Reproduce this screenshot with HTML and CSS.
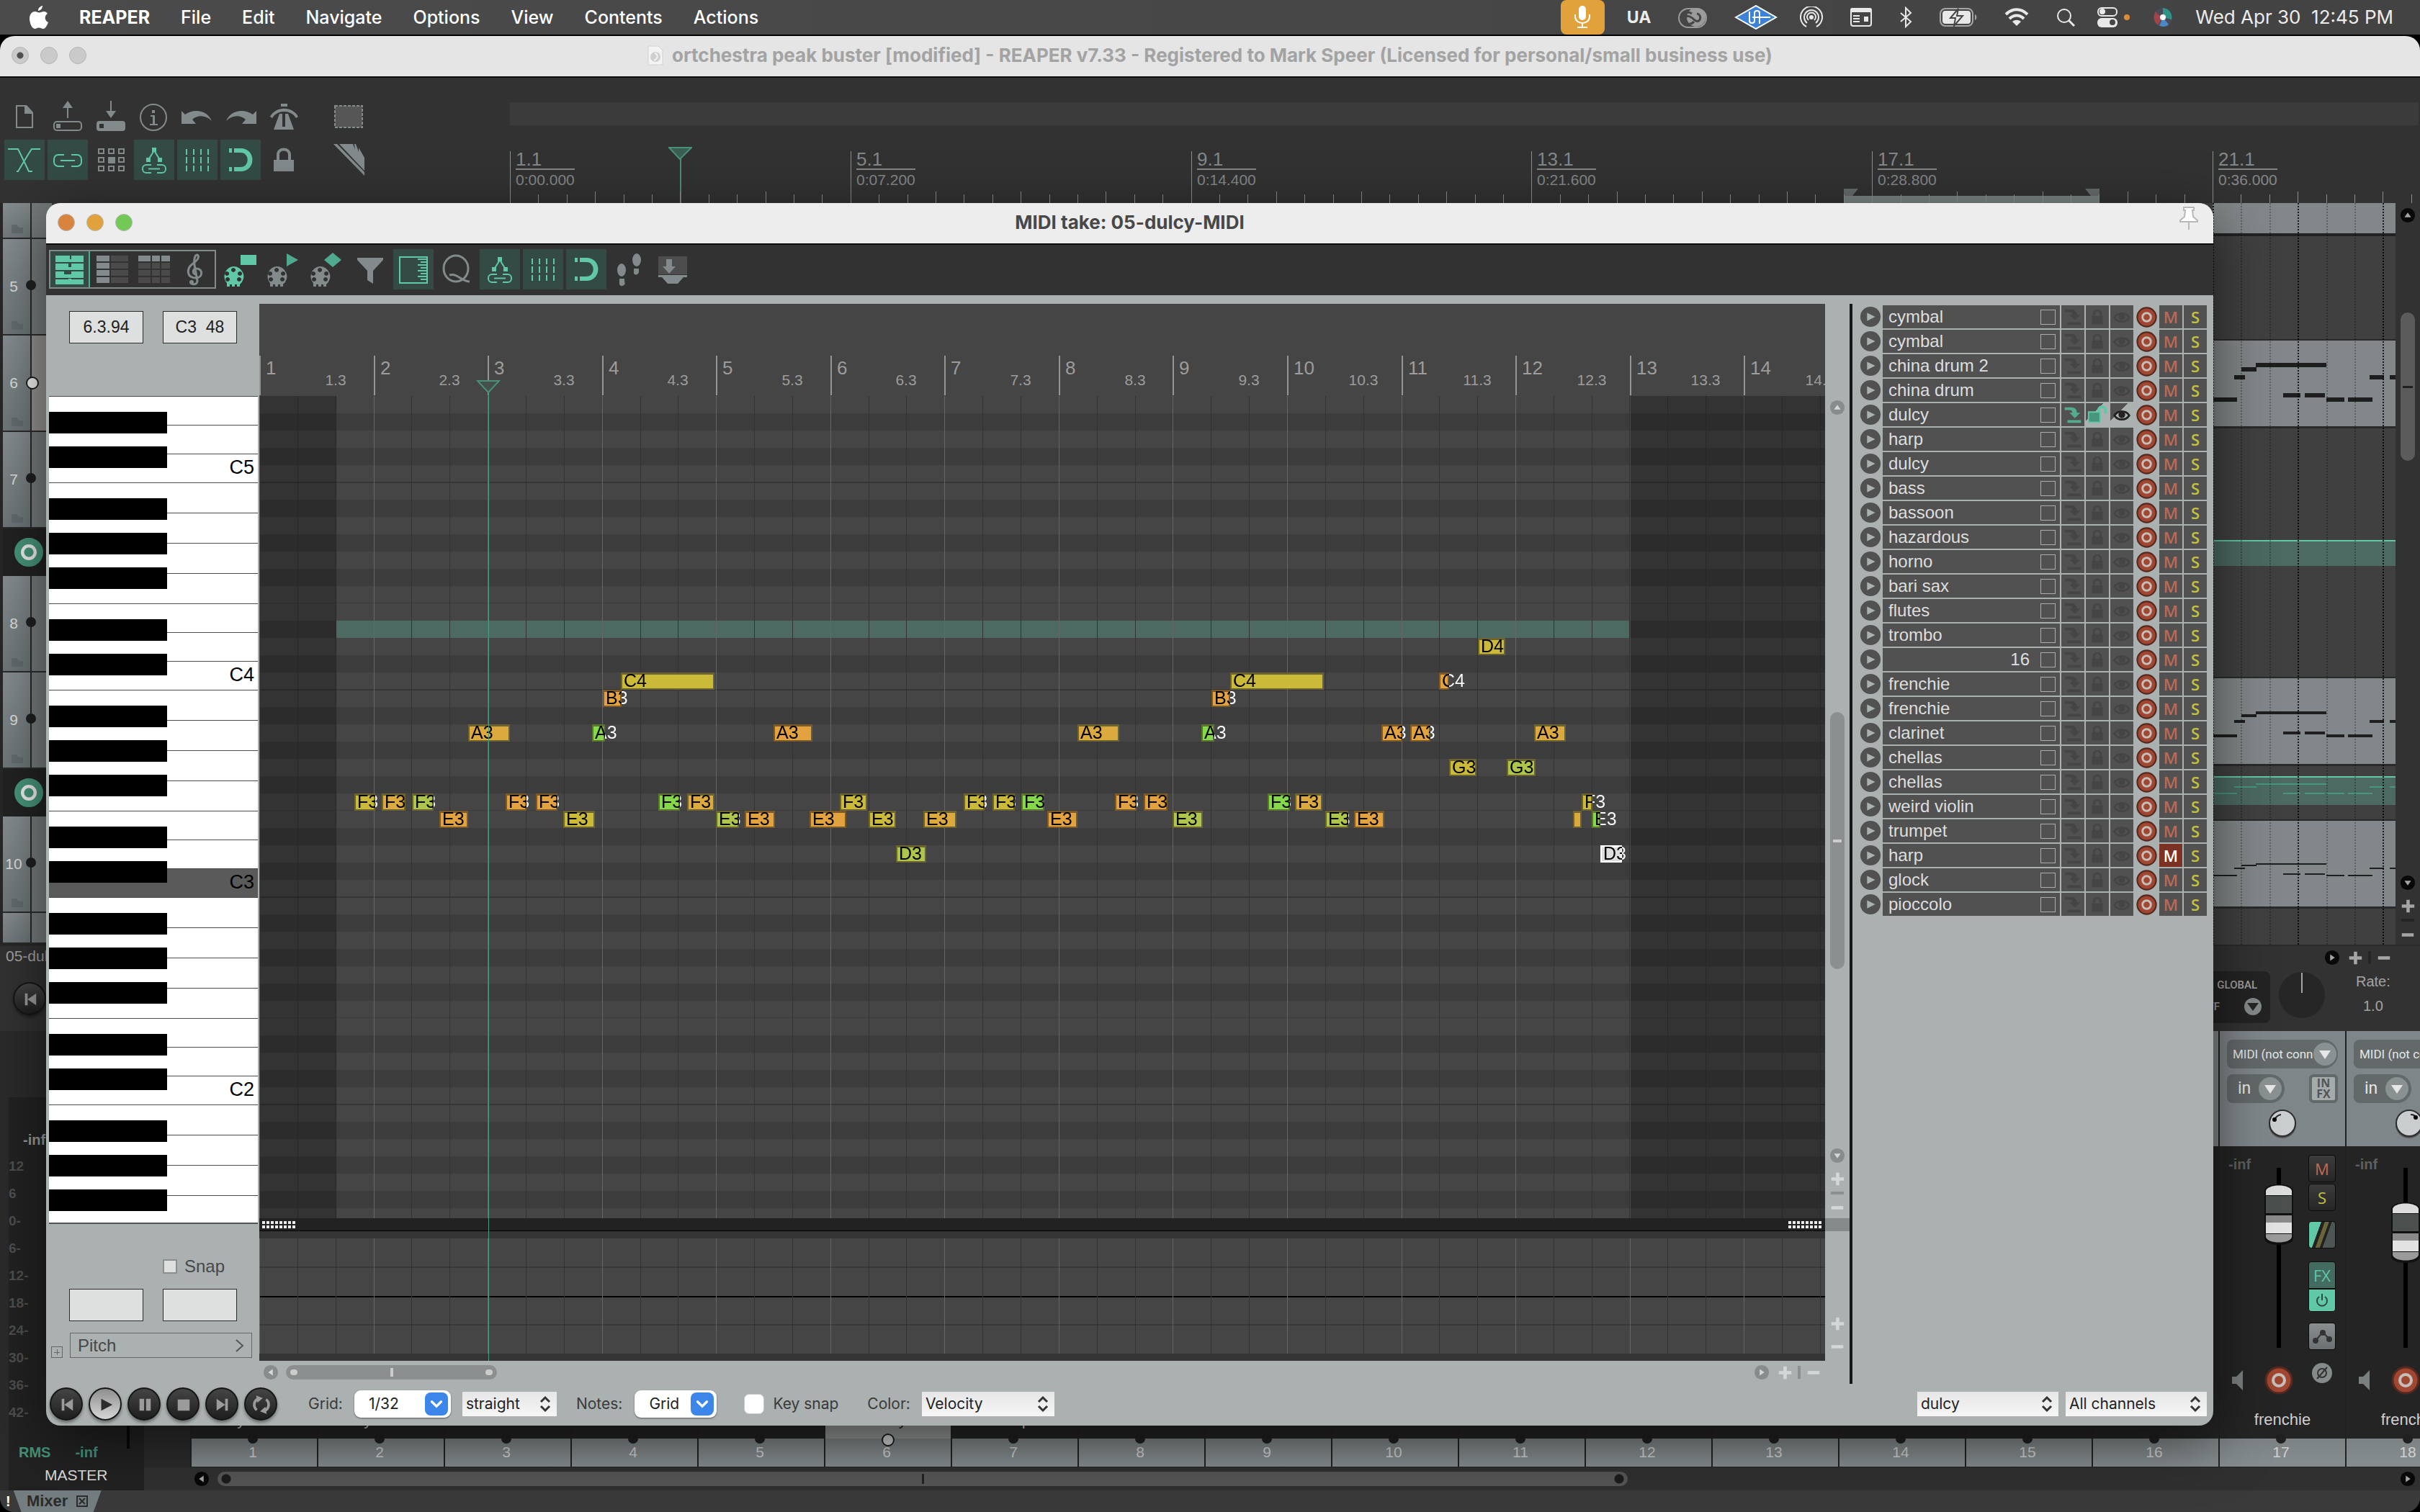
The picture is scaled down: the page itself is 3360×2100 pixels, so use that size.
FILE: index.html
```html
<!DOCTYPE html>
<html lang="en">
<head>
    <meta charset="UTF-8">
    <meta name="viewport" content="width=device-width, initial-scale=1.0">
    <title>REAPER - MIDI take: 05-dulcy-MIDI</title>
    <link rel="stylesheet" href="styles.css">
</head>
<body>

<!-- shared icons -->
<svg class="sprite" aria-hidden="true">
    <symbol id="i-envlink" viewBox="0 0 56 56">
        <g fill="none" stroke="currentColor" stroke-width="2"><path d="M20 28l8-13 8 13M24 35h-7a5 5 0 0 0-5 5v1a5 5 0 0 0 5 5h7M32 35h7a5 5 0 0 1 5 5v1a5 5 0 0 1-5 5h-7M20 40.500h16"/></g>
        <path d="M25 11h6v6h-6zM17 25h6v6h-6zM33 25h6v6h-6z" fill="currentColor"/>
    </symbol>
    <symbol id="i-gridlines" viewBox="0 0 56 56"><path d="M13 13v8M23 13v8M33 13v8M43 13v8M13 24v9M23 24v9M33 24v9M43 24v9M13 36v8M23 36v8M33 36v8M43 36v8" stroke="currentColor" stroke-width="2"/></symbol>
    <symbol id="i-magnet" viewBox="0 0 56 56"><path d="M12 12h4v6h-4zM19 12h9c22 0 22 32 0 32h-9v-6h9c13 0 13-20 0-20h-9zM12 38h4v6h-4z" fill="currentColor"/></symbol>
    <symbol id="i-plug" viewBox="0 0 56 56"><path fill-rule="evenodd" fill="currentColor" d="M18 24a14 14 0 0 1 9 25v3h-4v-3h-3v3h-4v-3h-3v3h-4v-5l-1-1a14 14 0 0 1 10-22zM18 26a3 3 0 1 0 .1 0zM9 31a3 3 0 1 0 .1 0zM27 31a3 3 0 1 0 .1 0zM10 39a3 3 0 1 0 .1 0zM26 39a3 3 0 1 0 .1 0z"/></symbol>
    <symbol id="i-left" viewBox="0 0 24 24"><circle cx="12" cy="12" r="11" fill="var(--c)"/><path d="M15 7v10l-7-5z" fill="var(--t)"/></symbol>
    <symbol id="i-right" viewBox="0 0 24 24"><circle cx="12" cy="12" r="11" fill="var(--c)"/><path d="M9 7v10l7-5z" fill="var(--t)"/></symbol>
    <symbol id="i-up" viewBox="0 0 24 24"><circle cx="12" cy="12" r="11" fill="var(--c)"/><path d="M7 15h10l-5-7z" fill="var(--t)"/></symbol>
    <symbol id="i-down" viewBox="0 0 24 24"><circle cx="12" cy="12" r="11" fill="var(--c)"/><path d="M7 9h10l-5 7z" fill="var(--t)"/></symbol>
    <symbol id="i-plus" viewBox="0 0 24 24"><path d="M10 3h5v7h7v5h-7v7h-5v-7H3v-5h7z" fill="var(--t)"/></symbol>
    <symbol id="i-minus" viewBox="0 0 24 24"><path d="M3 10h18v5H3z" fill="var(--t)"/></symbol>
    <symbol id="i-updown" viewBox="0 0 18 24"><path d="M3 9l6-6 6 6M3 15l6 6 6-6" fill="none" stroke="#333" stroke-width="3"/></symbol>
    <symbol id="i-chev" viewBox="0 0 24 24"><path d="M6 9l6 6 6-6" fill="none" stroke="#fff" stroke-width="3" stroke-linecap="round"/></symbol>
    <symbol id="i-prev" viewBox="0 0 48 48"><path d="M16 15h4v18h-4zM33 15v18l-13-9z" fill="currentColor"/></symbol>
    <symbol id="i-play" viewBox="0 0 32 32"><circle cx="16" cy="16" r="15" fill="#515151"/><path d="M11 10v12l12-6z" fill="#abb1b1"/></symbol>
    <symbol id="i-insert" viewBox="0 0 32 32"><path d="M4 5h10c5 0 8 3 8 8h5l-8 8-8-8h4c0-3-1-4-4-4H4zM8 24h20v4H8z" fill="currentColor"/></symbol>
    <symbol id="i-lock" viewBox="0 0 32 32"><path d="M8 15h16v12H8z" fill="currentColor"/><path d="M11 15v-4c0-6 10-6 10 0v4" fill="none" stroke="currentColor" stroke-width="3"/></symbol>
    <symbol id="i-unlock" viewBox="0 0 32 32"><path d="M3 12h17v15H3z" fill="#47957c" stroke="#60c7a7" stroke-width="2"/><path d="M18 12V9c0-6 10-6 10 0v5" fill="none" stroke="#60c7a7" stroke-width="4"/></symbol>
    <symbol id="i-eye" viewBox="0 0 32 32"><path d="M5 17c5-8 17-8 22 0-5 8-17 8-22 0z" fill="none" stroke="currentColor" stroke-width="3"/><circle cx="16" cy="16" r="5" fill="currentColor"/></symbol>
    <symbol id="i-rec" viewBox="0 0 40 40"><circle cx="20" cy="20" r="18" fill="#a04631" stroke="#55291f" stroke-width="3"/><circle cx="20" cy="20" r="8" fill="none" stroke="#c4bfbb" stroke-width="4"/></symbol>
    <symbol id="i-folder" viewBox="0 0 16 12"><path d="M0 0h7l3 4h6v8H0z" fill="#646b6c"/></symbol>
</svg>

<header class="menubar">
    <nav class="menus">
        <svg class="apple" viewBox="0 0 26 32"><path d="M18 0c.3 3-2.500 7-6 7-.4-3 2.500-6.500 6-7zM25 11c-5 3-4 10 1 12-1.500 4-4 9-7 9-2.500 0-3-1.500-6-1.500S9.500 32 7.500 32C3 32 0 23 0 18 0 11 4 8 7.500 8c2.500 0 4 1.500 6 1.500S17 8 20 8c2 0 4 1 5 3z" fill="#fff"/></svg>
        <button class="app-name">REAPER</button>
        <button>File</button>
        <button>Edit</button>
        <button>Navigate</button>
        <button>Options</button>
        <button>View</button>
        <button>Contents</button>
        <button>Actions</button>
    </nav>
    <div class="status">
        <span class="mic"><svg viewBox="0 0 24 32" width="24" height="32"><rect x="7" y="0" width="10" height="20" rx="5" fill="#fff"/><path d="M2 12v3c0 12 20 12 20 0v-3M12 24v5M5 30h14" fill="none" stroke="#fff" stroke-width="2"/></svg></span>
        <b class="ua tight">UA</b>
        <svg viewBox="0 0 40 30" width="40" height="30"><rect x="1" y="3" width="38" height="26" rx="13" fill="none" stroke="#9b9b9b" stroke-width="2"/><circle cx="25" cy="15" r="13" fill="#9b9b9b"/><path d="M19 10c-6-4-13 0-13 7 0 9 12 9 16 4M10 19c0-8 6-7 13 0 8 6 11-8 3-9" fill="none" stroke="#464646" stroke-width="3"/></svg>
        <svg viewBox="0 0 60 34" width="60" height="34"><path d="M2 17L30 1l28 16-28 16z" fill="#3b82d8" stroke="#fff" stroke-width="2"/><path d="M21 9v13c0 4 7 4 7 0V11c0-4 7-4 7 0v15M25 17h25" fill="none" stroke="#fff" stroke-width="2"/></svg>
        <svg class="tight" viewBox="0 0 32 30" width="32" height="30"><g fill="none" stroke="#e8e8e8" stroke-width="2"><path d="M9 28a15 15 0 1 1 14 0M10 23a10 10 0 1 1 12 0M12 19a6 6 0 1 1 8 0"/></g><circle cx="16" cy="15" r="3" fill="#e8e8e8"/></svg>
        <svg viewBox="0 0 30 26" width="30" height="26"><path d="M3 0h24a3 3 0 0 1 3 3v3H0V3a3 3 0 0 1 3-3z" fill="#e8e8e8"/><rect x="1" y="1" width="28" height="24" rx="3" fill="none" stroke="#e8e8e8" stroke-width="2"/><path d="M4 11h9M4 15h9M4 19h9" stroke="#e8e8e8" stroke-width="2"/><path d="M19 12h6v7h-6z" fill="#e8e8e8"/></svg>
        <svg viewBox="0 0 18 30" width="18" height="30"><path d="M2 9l14 12-7 7V2l7 7L2 21" fill="none" stroke="#e8e8e8" stroke-width="2"/></svg>
        <svg viewBox="0 0 52 26" width="52" height="26"><rect x="1" y="1" width="45" height="24" rx="7" fill="none" stroke="#a5a5a5" stroke-width="2"/><rect x="4" y="4" width="39" height="18" rx="4" fill="#e8e8e8"/><path d="M49 9c3 1 3 7 0 8z" fill="#a5a5a5"/><path d="M26 1L15 14h7l-2 11 12-14h-8z" fill="#e8e8e8" stroke="#464646" stroke-width="2"/></svg>
        <svg viewBox="0 0 34 26" width="34" height="26"><g fill="none" stroke="#e8e8e8" stroke-width="4"><path d="M2 9c9-9 21-9 30 0M7 15c6-6 14-6 20 0"/></g><path d="M11 19c4-3 8-3 12 0l-6 6z" fill="#e8e8e8"/></svg>
        <svg viewBox="0 0 26 26" width="26" height="26"><circle cx="11" cy="11" r="9" fill="none" stroke="#e8e8e8" stroke-width="2"/><path d="M17 17l8 8" stroke="#e8e8e8" stroke-width="3"/></svg>
        <svg class="tight" viewBox="0 0 46 28" width="46" height="28"><rect x="1" y="1" width="26" height="11" rx="5" fill="none" stroke="#e8e8e8" stroke-width="2"/><circle cx="7" cy="6" r="4" fill="#e8e8e8"/><rect x="0" y="15" width="28" height="13" rx="6" fill="#e8e8e8"/><circle cx="21" cy="21" r="4" fill="#464646"/><circle cx="41" cy="14" r="4" fill="#dc8d35"/></svg>
        <svg class="tight" viewBox="0 0 28 28" width="28" height="28"><circle cx="14" cy="14" r="13" fill="#4a4a58"/><path d="M14 1a13 13 0 0 1 12 16L14 14z" fill="#2f9385"/><path d="M4 6c3 5 7 6 10 8L7 25C1 20 0 12 4 6z" fill="#a3434a"/><path d="M14 14l8 10c-4 4-9 3-13 2z" fill="#4a87c4"/><circle cx="14" cy="14" r="4" fill="#fff"/></svg>
        <time class="tight">Wed Apr 30&nbsp; 12:45 PM</time>
    </div>
</header>

<main class="daw">
    <div class="titlebar titlebar-main">
        <div class="lights lights-off"><i class="light"></i><i class="light"></i><i class="light"></i></div>
        <div class="win-title">
            <svg viewBox="0 0 22 28" width="22" height="28"><path d="M1 1h14l6 6v20H1z" fill="#f3f3f3" stroke="#d2d2d2"/><circle cx="11" cy="16" r="7" fill="#cfcfcf"/><path d="M10 11c6 1 4 8-1 10" stroke="#f3f3f3" stroke-width="2" fill="none"/></svg>
            <span>ortchestra peak buster [modified] - REAPER v7.33 - Registered to Mark Speer (Licensed for personal/small business use)</span>
        </div>
    </div>

    <section class="top">
        <div class="toolbars">
            <div class="toolbar">
                <button class="tool" aria-label="New project"><svg viewBox="0 0 56 56"><path d="M17 13h13l9 10v20H17z" fill="none" stroke="currentColor" stroke-width="2"/><path d="M28 12h3l9 10v2H28z" fill="currentColor"/></svg></button>
                <button class="tool" aria-label="Open project"><svg viewBox="0 0 56 56"><rect x="9" y="35" width="38" height="12" rx="4" fill="none" stroke="currentColor" stroke-width="2"/><path d="M12 38h6v6h-6zM27 30V16h-6l7-10 7 10h-6v14z" fill="currentColor"/></svg></button>
                <button class="tool" aria-label="Save project"><svg viewBox="0 0 56 56"><path fill-rule="evenodd" d="M12 34h32a4 4 0 0 1 4 4v6a4 4 0 0 1-4 4H12a4 4 0 0 1-4-4v-6a4 4 0 0 1 4-4zM12 38v6h6v-6zM27 6v14h-6l7 10 7-10h-6V6z" fill="currentColor"/></svg></button>
                <button class="tool" aria-label="Project settings"><svg viewBox="0 0 56 56"><circle cx="27" cy="29" r="18" fill="none" stroke="currentColor" stroke-width="2"/><path d="M25 19h4v4h-4zM23 26h6v12h4v2H22v-2h4V28h-3z" fill="currentColor"/></svg></button>
                <button class="tool" aria-label="Undo"><svg viewBox="0 0 56 56"><path d="M6 20l5 5c13-9 31-6 37 9-8-8-19-9-27-2l5 6H6z" fill="currentColor"/></svg></button>
                <button class="tool" aria-label="Redo"><svg viewBox="0 0 56 56"><path d="M50 20l-5 5C32 16 14 19 8 34c8-8 19-9 27-2l-5 6h20z" fill="currentColor"/></svg></button>
                <button class="tool" aria-label="Metronome"><svg viewBox="0 0 56 56"><path d="M24 10h9v4h-9zM22 24h4v18h4V24h4l8 22H14zM9 28c8-15 31-15 39 0l-3 2c-7-12-26-12-33 0z" fill="currentColor"/></svg></button>
                <button class="tool spaced" aria-label="Marquee"><svg viewBox="0 0 56 56"><rect x="9" y="13" width="38" height="30" fill="#565656" stroke="currentColor" stroke-width="2" stroke-dasharray="4 2"/></svg></button>
            </div>
            <div class="toolbar">
                <button class="tool on" aria-label="Auto crossfade"><svg viewBox="0 0 56 56"><path d="M5 13h14l3 6 12 25h5M50 13H38l-4 6-15 25h-2" fill="none" stroke="currentColor" stroke-width="2"/></svg></button>
                <button class="tool on" aria-label="Item grouping"><svg viewBox="0 0 56 56"><path d="M23 21h-8a6 6 0 0 0-6 6v4a6 6 0 0 0 6 6h8M33 21h8a6 6 0 0 1 6 6v4a6 6 0 0 1-6 6h-8M18 29h20" fill="none" stroke="currentColor" stroke-width="2"/></svg></button>
                <button class="tool" aria-label="Ripple editing"><svg viewBox="0 0 56 56"><g fill="none" stroke="currentColor" stroke-width="2"><path d="M11 13h7v6h-7zM25 13h7v6h-7zM39 13h7v6h-7zM11 25h7v6h-7zM39 25h7v6h-7zM11 37h7v6h-7zM25 37h7v6h-7zM39 37h7v6h-7z"/></g><path d="M24 24h10v9H24z" fill="currentColor"/></svg></button>
                <button class="tool on" aria-label="Move envelopes"><svg><use href="#i-envlink"/></svg></button>
                <button class="tool on" aria-label="Grid lines"><svg><use href="#i-gridlines"/></svg></button>
                <button class="tool on" aria-label="Snap"><svg><use href="#i-magnet"/></svg></button>
                <button class="tool" aria-label="Locking"><svg viewBox="0 0 56 56"><path d="M14 28h28v16H14z" fill="currentColor"/><path d="M20 28v-7c0-10 16-10 16 0v7" fill="none" stroke="currentColor" stroke-width="4"/></svg></button>
                <button class="tool spaced" aria-label="Customize"><svg viewBox="0 0 56 56"><path d="M7 6h5l38 39v5zM15 6h19l3 8-1-8h2l4 11v-6l8 14v18z" fill="currentColor"/></svg></button>
            </div>
        </div>
        <div class="timeline">
            <div class="timeline-strip"></div>
            <div class="ruler" id="ruler">
                <div class="loop"><i class="loop-edge"></i><i class="loop-edge loop-end"></i></div>
                <div class="cursor"><svg viewBox="0 0 33 18" width="33" height="18"><path d="M1 1h31L16 17z" fill="#3c5f55" stroke="#4a8f7a" stroke-width="2"/></svg></div>
            </div>
        </div>
    </section>

    <section class="arrange">
        <div class="tcp" id="tcp"></div>
        <div class="lanes" id="lanes"></div>
        <div class="vscroll vscroll-main">
            <svg class="dot"><use href="#i-up"/></svg>
            <div class="vthumb vthumb-main"></div>
            <svg class="dot push"><use href="#i-down"/></svg>
            <svg class="dot"><use href="#i-plus"/></svg>
            <i class="vbar"></i>
            <svg class="dot"><use href="#i-minus"/></svg>
        </div>
    </section>

    <section class="transport">
        <div class="transport-left">
            <span class="status-text">05-dulcy-MIDI</span>
            <button class="round" aria-label="Go to start"><svg><use href="#i-prev"/></svg></button>
        </div>
        <div class="transport-right">
            <div class="zoomers">
                <svg class="dot"><use href="#i-right"/></svg>
                <svg class="dot"><use href="#i-plus"/></svg>
                <i class="tick"></i>
                <svg class="dot"><use href="#i-minus"/></svg>
            </div>
            <div class="rate-row">
                <div class="global">
                    <span>GLOBAL</span>
                    <div class="global-mode"><span>OFF</span><svg viewBox="0 0 24 24" width="24" height="24"><circle cx="12" cy="12" r="12" fill="#84898a"/><path d="M4 7h16l-8 11z" fill="#252525"/></svg></div>
                </div>
                <svg class="rate-knob" viewBox="0 0 66 66"><circle cx="33" cy="33" r="32" fill="#262626"/><path d="M33 2v28" stroke="#a5a5a5" stroke-width="2"/></svg>
                <div class="rate"><span>Rate:</span><span>1.0</span></div>
            </div>
        </div>
    </section>

    <section class="mixer">
        <div class="master">
            <b class="peak">-inf</b>
            <div class="scale"><span>12</span><span>6</span><span>0-</span><span>6-</span><span>12-</span><span>18-</span><span>24-</span><span>30-</span><span>36-</span><span>42-</span></div>
            <div class="rms"><b>RMS</b><b>-inf</b></div>
            <span class="master-name">MASTER</span>
        </div>
        <div class="mixer-right">
            <div class="strips" id="strips"></div>
            <div class="mixer-scroll">
                <svg class="dot"><use href="#i-left"/></svg>
                <div class="mixer-thumb"></div>
                <svg class="dot push-x"><use href="#i-right"/></svg>
            </div>
        </div>
    </section>

    <footer class="docker">
        <b>!</b>
        <button class="tab">Mixer <svg viewBox="0 0 16 16" width="16" height="16"><path d="M1 1h14v14H1zM4 4l8 8M12 4l-8 8" fill="none" stroke="#2c2c2c" stroke-width="2"/></svg></button>
    </footer>
</main>

<section class="midi-window">
    <div class="titlebar">
        <div class="lights"><i class="light light-close"></i><i class="light light-min"></i><i class="light light-max"></i></div>
        <div class="win-title">MIDI take: 05-dulcy-MIDI</div>
        <svg class="pin" viewBox="0 0 28 34" width="28" height="34"><path d="M7 2h14v4h-2l1 9 6 5v2H2v-2l6-5 1-9H7z" fill="#fff" stroke="#b8b8b8" stroke-width="2"/><path d="M14 22v11" stroke="#b8b8b8" stroke-width="2"/></svg>
    </div>
    <div class="toolbar midi-toolbar">
        <div class="view-modes">
            <button class="tool on" aria-label="Piano roll"><svg viewBox="0 0 56 56"><path d="M9 8h20v5h2V8h17v9H9zM9 19h18v5h4v-5h17v9H9zM9 30h12v4h10v-4h17v9H9zM9 41h18v-1h4v1h17v7H9z" fill="currentColor"/></svg></button>
            <button class="tool" aria-label="Named notes"><svg viewBox="0 0 56 56"><path d="M7 8h18v8H7zM7 18h18v8H7zM7 28h18v8H7zM7 38h18v8H7z" fill="currentColor"/><path d="M27 8h24v8H27zM27 18h24v8H27zM27 28h24v8H27zM27 38h24v8H27z" fill="#4a4a4a"/></svg></button>
            <button class="tool" aria-label="Event list"><svg viewBox="0 0 56 56"><path d="M7 8h17v8H7zM26 8h11v8H26zM39 8h12v8H39z" fill="currentColor"/><path d="M7 18h17v8H7zM26 18h11v8H26zM39 18h12v8H39zM7 28h17v8H7zM26 28h11v8H26zM39 28h12v8H39zM7 38h17v8H7zM26 38h11v8H26zM39 38h12v8H39z" fill="#4a4a4a"/></svg></button>
            <button class="tool" aria-label="Notation"><svg viewBox="0 0 56 56"><path d="M28 34c-5 0-5-8 1-8 9 0 9 13-1 13-13 0-14-13-4-20 8-6 9-10 6-12-4 0-5 8-4 14l4 22c0 6-8 6-9 2" fill="none" stroke="currentColor" stroke-width="3"/><circle cx="22" cy="45" r="3" fill="currentColor"/></svg></button>
        </div>
        <button class="tool tool-green" aria-label="Input to new notes"><svg viewBox="0 0 56 56"><use href="#i-plug"/><path d="M28 8h22v14H28z" fill="#60c7a7"/></svg></button>
        <button class="tool" aria-label="Input on play"><svg viewBox="0 0 56 56"><use href="#i-plug"/><path d="M32 6l16 9-16 9z" fill="#4fa98e"/></svg></button>
        <button class="tool" aria-label="Input step"><svg viewBox="0 0 56 56"><use href="#i-plug"/><path d="M36 5l12 10-12 10-12-10z" fill="#4fa98e"/></svg></button>
        <button class="tool" aria-label="Filter events"><svg viewBox="0 0 56 56"><path d="M10 12h36v3L32 30v18l-8-5V30L10 15z" fill="currentColor"/></svg></button>
        <button class="tool on" aria-label="Track list"><svg viewBox="0 0 56 56"><path d="M9 11h38v36H9z" fill="none" stroke="currentColor" stroke-width="2"/><path d="M34 14h12M38 18h8M34 22h12M38 26h8M34 30h12M38 34h8M34 38h12M38 42h8" stroke="currentColor" stroke-width="2"/></svg></button>
        <button class="tool" aria-label="Quantize"><svg viewBox="0 0 56 56"><ellipse cx="27" cy="27" rx="17" ry="18" fill="none" stroke="currentColor" stroke-width="3"/><path d="M18 36c12-3 16 9 28 9" fill="none" stroke="currentColor" stroke-width="3"/></svg></button>
        <button class="tool on" aria-label="Move CC with notes"><svg><use href="#i-envlink"/></svg></button>
        <button class="tool on" aria-label="Show grid"><svg><use href="#i-gridlines"/></svg></button>
        <button class="tool on" aria-label="Snap to grid"><svg><use href="#i-magnet"/></svg></button>
        <button class="tool" aria-label="Step input"><svg viewBox="0 0 56 56"><ellipse cx="17" cy="29" rx="6" ry="9" fill="currentColor"/><path d="M14 41h7v4a4 4 0 0 1-7 4z" fill="currentColor"/><ellipse cx="38" cy="15" rx="6" ry="9" fill="currentColor"/><path d="M34 27h7v5a4 4 0 0 1-7 2z" fill="currentColor"/></svg></button>
        <button class="tool" aria-label="Dock editor"><svg viewBox="0 0 56 56"><path d="M8 10h40v25H8z" fill="#4d4d4d"/><path d="M19 14h8v10h5l-9 10-9-10h5zM8 36h40v3h-5l-8 9H21l-8-9H8z" fill="currentColor"/></svg></button>
    </div>

    <div class="midi-body">
        <aside class="keys-panel">
            <div class="readouts">
                <output class="readout">6.3.94</output>
                <output class="readout">C3&nbsp; 48</output>
            </div>
            <div class="keyboard" id="keyboard"></div>
            <div class="cc-panel">
                <label class="snap"><input type="checkbox"> Snap</label>
                <div class="cc-boxes">
                    <input type="text" class="readout" aria-label="CC position">
                    <input type="text" class="readout" aria-label="CC value">
                </div>
                <div class="lane-row">
                    <button class="lane-add" aria-label="Add lane"></button>
                    <button class="lane-pick">Pitch <svg viewBox="0 0 12 20" width="12" height="20"><path d="M1 2l9 8-9 8" fill="none" stroke="#555" stroke-width="2"/></svg></button>
                </div>
            </div>
        </aside>

        <div class="roll">
            <div class="roll-canvas" id="roll">
                <div class="roll-ruler" id="rollRuler"></div>
                <div class="roll-grid" id="rollGrid">
                    <div class="shade shade-left"></div>
                    <div class="shade shade-right"></div>
                    <div class="accent-row"></div>
                </div>
                <div class="splitter"><i class="grip"></i><i class="grip"></i></div>
                <div class="cc-lane" id="ccLane"></div>
                <div class="edit-cursor"><svg viewBox="0 0 34 20" width="34" height="20"><path d="M2 1h30L17 17z" fill="#454f4c" stroke="#4a8f7a" stroke-width="2"/></svg></div>
            </div>
            <div class="hscroll">
                <svg class="dot"><use href="#i-left"/></svg>
                <div class="hthumb"><i></i><i class="mark"></i><i></i></div>
                <svg class="dot push-x"><use href="#i-right"/></svg>
                <svg class="dot"><use href="#i-plus"/></svg>
                <i class="tick"></i>
                <svg class="dot"><use href="#i-minus"/></svg>
            </div>
        </div>

        <div class="vscroll vscroll-midi">
            <svg class="dot"><use href="#i-up"/></svg>
            <div class="vthumb vthumb-midi"></div>
            <svg class="dot push"><use href="#i-down"/></svg>
            <svg class="dot"><use href="#i-plus"/></svg>
            <i class="vbar"></i>
            <svg class="dot"><use href="#i-minus"/></svg>
            <i class="vsplit"></i>
            <svg class="dot cc-plus"><use href="#i-plus"/></svg>
            <svg class="dot"><use href="#i-minus"/></svg>
        </div>

        <div class="track-panel">
            <table class="track-list"><tbody id="tracks"></tbody></table>
        </div>
    </div>

    <div class="midi-foot">
        <div class="round-group">
            <button class="round" aria-label="Start"><svg><use href="#i-prev"/></svg></button>
            <button class="round round-light" aria-label="Play"><svg viewBox="0 0 48 48"><path d="M17 15v18l17-9z" fill="#2c2c2c"/></svg></button>
            <button class="round" aria-label="Pause"><svg viewBox="0 0 48 48"><path d="M16 15h7v18h-7zM26 15h7v18h-7z" fill="currentColor"/></svg></button>
            <button class="round" aria-label="Stop"><svg viewBox="0 0 48 48"><path d="M15 16h18v17H15z" fill="currentColor"/></svg></button>
            <button class="round" aria-label="End"><svg viewBox="0 0 48 48"><path d="M15 15v18l13-9zM28 15h4v18h-4z" fill="currentColor"/></svg></button>
            <button class="round" aria-label="Repeat"><svg viewBox="0 0 48 48"><path d="M17 32a10 10 0 0 1 2-17M31 16a10 10 0 0 1-2 17" fill="none" stroke="currentColor" stroke-width="4"/><path d="M16 10l10 4-8 7zM32 38l-10-4 8-7z" fill="currentColor"/></svg></button>
        </div>
        <label for="grid">Grid:</label>
        <span class="combo combo-grid"><select id="grid"><option>1/32</option></select><svg><use href="#i-chev"/></svg></span>
        <span class="pick pick-type"><select aria-label="Grid type"><option>straight</option></select><svg><use href="#i-updown"/></svg></span>
        <label for="notes" class="lbl-notes">Notes:</label>
        <span class="combo combo-notes"><select id="notes"><option>Grid</option></select><svg><use href="#i-chev"/></svg></span>
        <label class="keysnap"><input type="checkbox"> Key snap</label>
        <label for="color" class="lbl-color">Color:</label>
        <span class="pick pick-color"><select id="color"><option>Velocity</option></select><svg><use href="#i-updown"/></svg></span>
        <span class="pick pick-track"><select aria-label="Track"><option>dulcy</option></select><svg><use href="#i-updown"/></svg></span>
        <span class="pick pick-channel"><select aria-label="Channel"><option>All channels</option></select><svg><use href="#i-updown"/></svg></span>
    </div>
</section>

<script src="script.js"></script>
</body>
</html>
```
FILE: styles.css
```css
* {
    box-sizing: border-box;
}
body {
    margin: 0;
    height: 100vh;
    overflow: hidden;
    display: flex;
    flex-direction: column;
    gap: 2px;
    background: #000;
    font-family: "Liberation Sans", Arial, sans-serif;
    position: relative;
}
button, select, input {
    font: inherit;
    color: inherit;
    margin: 0;
    padding: 0;
    border: 0;
    background: none;
}
svg {
    display: block;
}
.sprite {
    position: absolute;
    width: 0;
    height: 0;
}

/* menu bar */
.menubar {
    height: 48px;
    flex: none;
    display: flex;
    justify-content: space-between;
    align-items: center;
    padding: 0 37px 0 41px;
    background: linear-gradient(90deg, #4b4b4b, #434343);
    color: #fff;
    font: 500 25px/48px Inter, sans-serif;
}
.menus, .status {
    display: flex;
    align-items: center;
}
.menus {
    gap: 43px;
}
.apple {
    width: 26px;
    height: 32px;
}
.app-name {
    font-weight: 700;
}
.status {
    gap: 38px;
    color: #ececec;
}
.status .tight {
    margin-left: -7px;
}
.mic {
    width: 61px;
    height: 48px;
    border-radius: 8px;
    background: #e2a23b;
    display: grid;
    place-items: center;
}
.ua {
    font-size: 23px;
}
.status time {
    font-weight: 400;
    font-size: 26px;
}

/* windows */
.daw {
    flex: 1;
    min-height: 0;
    display: flex;
    flex-direction: column;
    background: #323232;
    border-radius: 20px;
    overflow: hidden;
}
.titlebar {
    height: 58px;
    flex: none;
    display: grid;
    grid-template-columns: 160px 1fr 160px;
    align-items: center;
    padding: 0 16px 2px;
    background: #ededed;
    border-bottom: 2px solid #0c0c0c;
    color: #484848;
    font: 700 26px/30px Inter, sans-serif;
}
.titlebar-main {
    background: #e5e5e5;
    color: #a3a3a3;
}
.lights {
    display: flex;
    gap: 16px;
}
.light {
    width: 24px;
    height: 24px;
    border-radius: 50%;
    background: #c9cac9;
    border: 1px solid #b4b5b4;
}
.lights-off .light:first-child {
    background: radial-gradient(circle, #4f4f4f 4px, #c9cac9 5px);
}
.light-close {
    background: #d8843f;
}
.light-min {
    background: #e2a23b;
}
.light-max {
    background: #72c956;
}
.win-title {
    display: flex;
    justify-content: center;
    align-items: center;
    gap: 12px;
    white-space: nowrap;
}
.pin {
    justify-self: end;
    align-self: start;
    margin: 4px 4px 0 0;
}

/* toolbars */
.toolbar {
    display: flex;
    gap: 4px;
}
.tool {
    width: 56px;
    height: 56px;
    color: #838a8c;
}
.tool svg {
    width: 56px;
    height: 56px;
}
.tool.on {
    background: #344b45;
    color: #60c7a7;
}
.tool-green {
    color: #60c7a7;
}
.spaced {
    margin-left: 30px;
}
.top {
    height: 174px;
    flex: none;
    display: flex;
}
.toolbars {
    width: 708px;
    flex: none;
    padding: 26px 6px 0;
    display: flex;
    flex-direction: column;
    gap: 4px;
}

/* arrange ruler */
.timeline {
    flex: 1;
    padding-top: 34px;
    display: flex;
    flex-direction: column;
    min-width: 0;
}
.timeline-strip {
    height: 32px;
    margin-right: 2px;
    background: #3b3b3b;
}
.ruler {
    flex: 1;
    position: relative;
    overflow: hidden;
    color: #838788;
}
.ruler-tick {
    position: absolute;
    bottom: 0;
    width: 1px;
    height: 12px;
    background: #8a8f90;
}
.ruler-tick.bar {
    height: 16px;
}
.ruler-tick.major {
    height: 72px;
}
.ruler-label {
    position: absolute;
    top: 34px;
    font-size: 26px;
    line-height: 26px;
}
.ruler-label small {
    display: block;
    border-top: 2px solid #838788;
    padding-top: 3px;
    font-size: 21px;
    line-height: 22px;
}
.loop {
    position: absolute;
    left: 1852px;
    bottom: 0;
    width: 355px;
    height: 20px;
    border-bottom: 10px solid #7a8282;
    display: flex;
    justify-content: space-between;
}
.loop-edge {
    width: 20px;
    height: 10px;
    background: #666b6c;
    clip-path: polygon(0 0, 100% 0, 60% 100%, 0 100%);
}
.loop-end {
    clip-path: polygon(0 0, 100% 0, 100% 100%, 40% 100%);
}
.cursor {
    position: absolute;
    left: 220px;
    top: 30px;
    bottom: 0;
    width: 33px;
    background: linear-gradient(#4a8f7a, #4a8f7a) 16px 0 / 2px 100% no-repeat;
}

/* arrange area */
.arrange {
    height: 1032px;
    flex: none;
    display: flex;
    border-bottom: 2px solid #2a2a2a;
}
.tcp {
    width: 72px;
    padding-left: 4px;
    display: flex;
    flex-direction: column;
    background: #282828;
    overflow: hidden;
}
.tcp-row {
    flex: none;
    height: 134px;
    display: grid;
    grid-template-columns: 38px 1fr;
    column-gap: 2px;
    border-bottom: 2px solid #2b2b2b;
    position: relative;
    font-size: 21px;
    color: #dedede;
}
.tcp-row > span {
    background: linear-gradient(160deg, #868d90, #6c7475);
    line-height: 131px;
    text-align: center;
    padding-right: 8px;
}
.tcp-row > i {
    background: #757b7c;
}
.tcp-row.selected > i {
    background: #949391;
}
.tcp-row::after {
    content: "";
    position: absolute;
    left: 32px;
    top: 57px;
    width: 14px;
    height: 14px;
    border-radius: 50%;
    background: #202020;
}
.tcp-row.selected::after {
    background: #f0f0f0;
    border: 2px solid #202020;
}
.tcp-row svg {
    position: absolute;
    left: 12px;
    bottom: 6px;
    width: 16px;
    height: 12px;
}
.tcp-first {
    height: 50px;
}
.tcp-first::after {
    display: none;
}
.tcp-last {
    height: 43px;
}
.tcp-last::after {
    display: none;
}
.tcp-folder {
    height: 66px;
    flex: none;
    display: grid;
    place-items: center;
    padding-left: 4px;
    background: #222;
}
.ring {
    width: 40px;
    height: 40px;
    border-radius: 50%;
    border: 9px solid #47957c;
    background: radial-gradient(circle, #47957c 6px, #f0f0f0 7px);
}
.lanes {
    flex: 1;
    padding-left: 3000px;
    display: flex;
    flex-direction: column;
    position: relative;
    background: #404040;
    overflow: hidden;
}
.lane {
    flex: none;
}
.lane svg {
    width: 254px;
    height: 100%;
}
.lane-item {
    background: #828889;
    border-bottom: 3px solid #2a2a2a;
    border-top: 2px solid #2a2a2a;
}
.lane-teal {
    background: #4c6a62;
    border-top: 2px solid #60c7a7;
}
.lane-marker {
    background: #828889;
    border-bottom: 4px solid #222;
}
.lane-line {
    position: absolute;
    top: 0;
    bottom: 0;
    border-left: 2px dotted rgba(0, 0, 0, 0.28);
}
.lane-line.bar {
    border-color: rgba(0, 0, 0, 0.8);
}
.dot {
    --c: #888c8c;
    --t: #d4d7d7;
    width: 22px;
    height: 22px;
    flex: none;
}
.daw .dot {
    --c: #080808;
    --t: #a5a5a5;
}
.push {
    margin-top: auto;
}
.push-x {
    margin-left: auto;
}
.vscroll {
    display: flex;
    flex-direction: column;
    align-items: center;
    gap: 10px;
}
.vscroll-main {
    width: 34px;
    padding: 6px 0 3px;
    background: #323232;
}
.vthumb {
    width: 20px;
    border-radius: 10px;
}
.vthumb-main {
    height: 206px;
    margin-top: 114px;
    background: linear-gradient(#202020, #202020) center / 14px 3px no-repeat #5b5b5b;
}
.vbar {
    width: 18px;
    height: 4px;
    margin: -3px 0;
    background: #8c8f8f;
}
.tick {
    width: 4px;
    height: 18px;
    margin: 0 -3px;
    background: #8c8f8f;
}
.daw .vbar, .daw .tick {
    background: #252525;
}

/* transport */
.transport {
    height: 118px;
    flex: none;
    display: flex;
    justify-content: space-between;
    font-size: 20px;
    color: #a3a3a3;
}
.transport-left {
    padding: 0 0 0 8px;
    display: flex;
    flex-direction: column;
    gap: 22px;
}
.status-text {
    font-size: 21px;
    line-height: 28px;
}
.transport-left .round {
    margin-left: 10px;
}
.transport-right {
    width: 320px;
    display: flex;
    flex-direction: column;
    gap: 8px;
}
.zoomers {
    display: flex;
    align-items: center;
    justify-content: flex-end;
    gap: 10px;
    padding: 5px 39px 0 0;
}
.rate-row {
    display: flex;
    gap: 11px;
}
.global {
    width: 112px;
    height: 72px;
    padding: 6px 12px;
    border-radius: 8px;
    background: #232323;
    text-align: right;
    font: 500 15px/26px Roboto, sans-serif;
}
.global > span {
    padding-right: 6px;
}
.global-mode {
    display: flex;
    justify-content: flex-end;
    gap: 34px;
    align-items: center;
    padding-top: 4px;
}
.global-mode svg {
    flex: none;
}
.rate-knob {
    width: 66px;
    height: 66px;
}
.rate {
    padding: 2px 0 0 31px;
    display: flex;
    flex-direction: column;
    align-items: center;
    gap: 10px;
    line-height: 24px;
}
.round {
    width: 46px;
    height: 46px;
    flex: none;
    border-radius: 50%;
    color: #9b9b9b;
    background: linear-gradient(#454545, #1e1e1e);
    border: 2px solid #161616;
    box-shadow: 0 3px 4px rgba(0, 0, 0, 0.4);
    display: grid;
    place-items: center;
}
.round svg {
    width: 44px;
    height: 44px;
}
.round-light {
    background: linear-gradient(#8e8e8e, #d6d6d6);
}

/* mixer */
.mixer {
    flex: 1;
    min-height: 0;
    display: flex;
    background: #2b2b2b;
}
.master {
    width: 188px;
    flex: none;
    margin: 92px 0 0 12px;
    background: linear-gradient(#080808, #080808) 164px 0 / 4px 488px no-repeat #222;
    display: flex;
    flex-direction: column;
    font-size: 20px;
}
.peak {
    padding: 48px 0 0 20px;
    line-height: 22px;
    color: #999;
}
.scale {
    display: flex;
    flex-direction: column;
    padding-top: 7px;
    font-weight: 700;
    font-size: 19px;
    line-height: 38px;
    color: #4f4f4f;
}
.rms {
    margin-top: auto;
    display: flex;
    gap: 34px;
    padding-left: 14px;
    line-height: 32px;
    color: #47957c;
}
.master-name {
    padding: 0 0 5px 50px;
    line-height: 32px;
    font-size: 21px;
    color: #dedede;
}
.mixer-right {
    flex: 1;
    min-width: 0;
    display: flex;
    flex-direction: column;
}
.strips {
    flex: 1;
    min-height: 0;
    margin-left: 64px;
    display: flex;
    overflow: hidden;
}
.strip {
    width: 176px;
    flex: none;
    border-left: 2px solid #222;
    display: grid;
    grid-template-rows: 160px 1fr 40px;
    color: #d0d0d0;
}
.strip-in {
    background: #7f8689;
    padding: 12px 10px;
    display: grid;
    grid-template-columns: 80px 40px;
    justify-content: space-between;
    align-content: start;
    gap: 8px 0;
}
.pill {
    height: 40px;
    border-radius: 8px 20px 20px 8px;
    background: #636969;
    color: #e6e6e6;
    font: 17px/40px Roboto, sans-serif;
    display: flex;
    justify-content: space-between;
    align-items: center;
    padding: 0 4px 0 8px;
    white-space: nowrap;
}
.pill svg {
    flex: none;
}
.pill-wide {
    grid-column: 1 / 3;
}
.pill-in {
    font-size: 23px;
    padding-left: 15px;
}
.infx {
    border: 4px solid #636969;
    border-radius: 6px;
    background: #a5abab;
    color: #555;
    font: 700 16px/15px "Open Sans", sans-serif;
}
.pan {
    grid-column: 1 / 3;
    justify-self: center;
}
.strip-main {
    background: #242424;
    padding: 12px;
    display: grid;
    grid-template-columns: 48px 44px 1fr;
    grid-template-rows: 272px 1fr 28px;
}
.strip-inf {
    font: 700 20px/26px "Liberation Sans", sans-serif;
    color: #5f5f5f;
}
.fader {
    padding-top: 18px;
    justify-self: center;
}
.fader.low .cap {
    transform: translateY(25px);
}
.sbtns {
    width: 40px;
    justify-self: end;
    display: flex;
    flex-direction: column;
    align-items: center;
    font: 22px/36px "Open Sans", sans-serif;
}
.sbtn {
    width: 38px;
    height: 38px;
    flex: none;
    margin-bottom: 2px;
    border: 1px solid #0c0c0c;
    border-radius: 4px;
    background: linear-gradient(#3c3c3c, #262626);
}
.sbtn-m {
    color: #c26a52;
}
.sbtn-s {
    color: #c3c23f;
}
.sbtn-route {
    margin: 12px 0 18px;
    background: linear-gradient(110deg, #60c7a7 34%, #222 35% 44%, #6b6438 45% 56%, #222 57% 64%, #4d5555 65%);
}
.sbtn-fx {
    margin: 0;
    color: #60c7a7;
    background: #436b60;
    border-radius: 4px 4px 0 0;
}
.sbtn-pow {
    margin: 0 0 15px;
    height: 32px;
    background: #60c7a7;
    border-radius: 0 0 4px 4px;
    display: grid;
    place-items: center;
}
.sbtn-env {
    margin: 0;
    background: linear-gradient(#8a8f90, #6a7071);
}
.strip-bottom {
    align-self: center;
    justify-self: center;
}
.speaker {
    justify-self: start;
    margin-left: 3px;
}
.phase {
    justify-self: end;
    margin-right: 5px;
}
.strip-name {
    grid-row: 3;
    grid-column: 1 / 4;
    text-align: center;
    font-size: 22px;
    line-height: 28px;
    color: #d0d0d0;
}
.strip.selected .strip-main {
    background: #929695;
}
.strip.selected .strip-name {
    color: #222;
}
.strip-num {
    position: relative;
    background: linear-gradient(#7d8385, #868d8f);
    text-align: center;
    padding-right: 4px;
    font-size: 21px;
    line-height: 38px;
    border-bottom: 1px solid #222;
}
.strip-num::before {
    content: "";
    position: absolute;
    left: 78px;
    top: -7px;
    width: 14px;
    height: 14px;
    border-radius: 50%;
    background: #202020;
}
.strip.selected .strip-num::before {
    background: #d0d0d0;
    border: 2px solid #202020;
}
.mixer-scroll {
    height: 32px;
    flex: none;
    padding: 0 6px 0 69px;
    display: flex;
    align-items: center;
    gap: 11px;
    background: #303030;
}
.mixer-thumb {
    width: 1958px;
    height: 20px;
    border-radius: 10px;
    background: linear-gradient(#222, #222) center / 3px 14px no-repeat, radial-gradient(circle at 12px 10px, #1c1c1c 6px, transparent 7px), radial-gradient(circle at 1946px 10px, #1c1c1c 6px, #555 7px);
}
.docker {
    height: 30px;
    flex: none;
    display: flex;
    gap: 4px;
    padding-left: 8px;
    background: #3a3a3a;
    color: #fff;
    line-height: 30px;
    font-size: 20px;
}
.tab {
    width: 122px;
    display: flex;
    align-items: center;
    justify-content: center;
    gap: 12px;
    background: #747d7f;
    color: #2c2c2c;
    font-weight: 700;
    font-size: 22px;
    clip-path: polygon(0 0, 100% 0, 91% 100%, 9% 100%);
}

/* MIDI editor */
.midi-window {
    position: absolute;
    left: 64px;
    top: 282px;
    right: 287px;
    bottom: 120px;
    display: flex;
    flex-direction: column;
    background: #abb1b1;
    border-radius: 20px;
    overflow: hidden;
    box-shadow: 0 20px 80px rgba(0, 0, 0, 0.55);
}
.midi-toolbar {
    height: 70px;
    flex: none;
    padding: 6px 4px;
    background: #323232;
}
.view-modes {
    display: flex;
    gap: 2px;
    width: 232px;
    height: 54px;
    margin: 1px 2px 0 0;
    outline: 2px solid #838a8c;
    outline-offset: -2px;
}
.view-modes .tool {
    width: 58px;
    flex: 0 1 auto;
    height: 54px;
}
.view-modes .tool.on {
    outline: 2px solid #4fa98e;
    outline-offset: -2px;
}
.midi-body {
    flex: 1;
    min-height: 0;
    display: flex;
}
.keys-panel {
    width: 296px;
    flex: none;
    display: flex;
    flex-direction: column;
    padding-left: 4px;
}
.readouts, .cc-boxes {
    display: flex;
    gap: 27px;
    padding-left: 28px;
}
.readouts {
    height: 140px;
    padding-top: 22px;
}
.readout {
    width: 103px;
    height: 45px;
    border: 1px solid #2c2c2c;
    background: #dde0df;
    text-align: center;
    font-size: 23px;
    line-height: 42px;
    color: #222;
}
.keyboard {
    flex: 1;
    min-height: 0;
    margin-right: 2px;
    position: relative;
    overflow: hidden;
    background: #fff;
    border-top: 1px solid #4a4a4a;
    border-bottom: 2px solid #4f5454;
}
.key {
    height: 42px;
    border-bottom: 1px solid #4a4a4a;
    text-align: right;
    padding-right: 5px;
    font-size: 27px;
    line-height: 36px;
    color: #000;
}
.key.short {
    height: 40px;
}
.key.down {
    background: #5a5a5a;
}
.key-black {
    position: absolute;
    left: 0;
    width: 164px;
    height: 30px;
    background: #000;
}
.cc-panel {
    height: 222px;
    padding-top: 45px;
    font-size: 24px;
    color: #484848;
}
.snap {
    display: flex;
    align-items: center;
    gap: 10px;
    padding-left: 158px;
    line-height: 28px;
}
.snap input {
    appearance: none;
    width: 20px;
    height: 20px;
    border: 2px solid #8a8f8f;
    background: #dde0df;
}
.cc-boxes {
    padding-top: 17px;
}
.lane-row {
    display: flex;
    align-items: flex-end;
    gap: 10px;
    padding: 16px 0 0 3px;
}
.lane-add {
    width: 16px;
    height: 16px;
    border: 1px solid #666;
    background: linear-gradient(#666, #666) center / 8px 1px no-repeat, linear-gradient(#666, #666) center / 1px 8px no-repeat;
}
.lane-pick {
    width: 253px;
    height: 35px;
    padding: 0 10px;
    border: 1px solid #666;
    display: flex;
    justify-content: space-between;
    align-items: center;
}
.roll {
    flex: 1;
    min-width: 0;
    padding-top: 12px;
    display: flex;
    flex-direction: column;
}
.roll-canvas {
    flex: 1;
    min-height: 0;
    position: relative;
    overflow: hidden;
    display: flex;
    flex-direction: column;
    background: #454545;
}
.roll-ruler {
    height: 128px;
    flex: none;
    position: relative;
    color: #9c9c9c;
}
.roll-bar {
    position: absolute;
    bottom: 1px;
    height: 55px;
    border-left: 2px solid #959595;
    padding-left: 7px;
    font-size: 26px;
    line-height: 34px;
}
.roll-beat {
    position: absolute;
    bottom: 6px;
    width: 60px;
    text-align: center;
    font-size: 21px;
    line-height: 32px;
}
.roll-grid {
    flex: 1;
    position: relative;
    overflow: hidden;
    /* one octave from E down to F, 24px per note */
    background: repeating-linear-gradient(#454545 0 24px, #3c3c3c 24px 48px, #454545 48px 72px, #3c3c3c 72px 96px, #454545 96px 119px, #363636 119px 121px, #454545 121px 144px, #3c3c3c 144px 168px, #454545 168px 192px, #3c3c3c 192px 216px, #454545 216px 240px, #3c3c3c 240px 264px, #454545 264px 287px, #3c3c3c 287px 288px);
}
.shade {
    position: absolute;
    top: 0;
    bottom: 0;
    background: rgba(0, 0, 0, 0.26);
}
.shade-left {
    left: 0;
    width: 107px;
}
.shade-right {
    left: 1902px;
    right: 0;
}
.accent-row {
    position: absolute;
    left: 107px;
    top: 312px;
    width: 1795px;
    height: 24px;
    background: #4c6a62;
}
.vline {
    position: absolute;
    top: 0;
    bottom: 0;
    width: 1px;
    background: #333;
}
.vline.bar {
    background: #666;
}
.shaded.vline {
    background: #282828;
}
.shaded.vline.bar {
    background: #4a4a4a;
}
.note {
    position: absolute;
    height: 24px;
    border: 2px solid #6b6430;
    border-top-width: 3px;
    background: #cbba3a;
}
.note span {
    position: absolute;
    left: 2px;
    top: -4px;
    font-size: 25px;
    line-height: 24px;
    background: linear-gradient(90deg, #000 calc(var(--w) - 4px), #fff calc(var(--w) - 4px));
    background-clip: text;
    color: transparent;
}
.note-orange {
    background: #e2a23f;
    border-color: #7a5a2a;
}
.note-gold {
    background: #dba93d;
}
.note-lime {
    background: #acc54a;
}
.note-green {
    background: #85d84a;
    border-color: #5d7433;
}
.note-sel {
    background: #dedede;
    border-color: #fff;
}
.splitter {
    height: 18px;
    flex: none;
    background: #222;
    border-bottom: 1px solid #000;
    display: flex;
    justify-content: space-between;
    align-items: center;
    padding: 0 4px;
    z-index: 1;
}
.grip {
    width: 47px;
    height: 10px;
    background: repeating-linear-gradient(90deg, #ececec 0 4px, transparent 4px 6px);
    mask: linear-gradient(#000 0 4px, transparent 4px 6px, #000 6px);
}
.cc-lane {
    height: 180px;
    flex: none;
    position: relative;
    border: solid #353535;
    border-width: 10px 0;
    background: linear-gradient(transparent 39px, #393939 39px 41px, transparent 41px 80px, #000 80px 82px, transparent 82px 119px, #393939 119px 121px, transparent 121px);
}
.edit-cursor {
    position: absolute;
    left: 301px;
    top: 106px;
    bottom: 0;
    width: 34px;
    z-index: 2;
    background: linear-gradient(#4a9a80, #4a9a80) 17px 0 / 1px 100% no-repeat;
}
.hscroll {
    height: 32px;
    flex: none;
    display: flex;
    align-items: center;
    gap: 10px;
    padding: 0 5px;
}
.hthumb {
    width: 293px;
    height: 20px;
    border-radius: 10px;
    background: #8c8f8f;
    display: flex;
    justify-content: space-between;
    align-items: center;
    padding: 0 6px;
}
.hthumb i {
    width: 10px;
    height: 8px;
    border-radius: 4px;
    background: #ccc;
}
.hthumb .mark {
    width: 4px;
    height: 12px;
    border-radius: 0;
}
.vscroll-midi {
    width: 34px;
    flex: none;
    padding: 145px 0 41px;
}
.vthumb-midi {
    height: 357px;
    margin-top: 402px;
    background: linear-gradient(#ccc, #ccc) center / 12px 4px no-repeat #8c8f8f;
}
.vsplit {
    align-self: stretch;
    height: 18px;
    margin: -6px 0 0;
    background: #858b8b;
}
.cc-plus {
    margin-top: 107px;
}
.track-panel {
    width: 505px;
    flex: none;
    margin-top: 12px;
    border-left: 4px solid #161616;
    padding-left: 8px;
}
.track-list {
    border-collapse: separate;
    border-spacing: 2px;
    color: #dedede;
    font-size: 24px;
    line-height: 32px;
}
.track-list td {
    height: 32px;
    padding: 0;
    background: #515151;
}
.track-list svg {
    width: 30px;
    height: 30px;
    margin: 0 auto;
    color: #454545;
}
.track-list .c-play, .track-list .c-rec {
    min-width: 30px;
    background: none;
}
.track-list .c-rec {
    min-width: 32px;
}
.name-cell {
    width: 246px;
    display: flex;
    align-items: center;
    justify-content: space-between;
    padding: 0 6px 0 8px;
    height: 32px;
}
.name-cell.num span {
    margin-left: auto;
    padding-right: 15px;
}
.name-cell input {
    appearance: none;
    width: 21px;
    height: 21px;
    border: 1px solid #a9adad;
}
.track-list .c-ico {
    min-width: 32px;
}
.track-list .c-rec svg {
    width: 29px;
    height: 29px;
}
.track-list .active svg {
    color: #52ac90;
}
.track-list .active.lit {
    background: linear-gradient(135deg, #515151 38%, #abb1b1 38%);
}
.track-list .active.eye svg {
    color: #222;
}
.ms {
    width: 32px;
    height: 32px;
    display: block;
    font: 600 22px/32px "Open Sans", sans-serif;
    color: #bb6a55;
}
.ms-s {
    color: #c3c23f;
}
.ms-on {
    background: #7c3222;
    color: #fff;
}
.midi-foot {
    height: 58px;
    flex: none;
    display: flex;
    align-items: center;
    padding: 0 9px 2px 5px;
    font: 21px/28px Inter, sans-serif;
    color: #3a3a3a;
}
.round-group {
    display: flex;
    gap: 8px;
    margin-right: 43px;
}
.combo, .pick {
    position: relative;
    display: flex;
    align-items: center;
    color: #222;
}
.combo select, .pick select {
    appearance: none;
    width: 100%;
    height: 100%;
}
.combo {
    height: 38px;
    border-radius: 9px;
    background: #fff;
    box-shadow: 0 1px 2px rgba(0, 0, 0, 0.5);
}
.combo svg {
    position: absolute;
    right: 4px;
    width: 32px;
    height: 32px;
    padding: 3px;
    border-radius: 8px;
    background: #3b86e8;
    pointer-events: none;
}
.pick {
    height: 34px;
    background: linear-gradient(#e6e6e6, #f6f6f6);
}
.pick select {
    padding-left: 5px;
}
.pick svg {
    position: absolute;
    right: 7px;
    width: 18px;
    height: 24px;
    pointer-events: none;
}
.combo-grid {
    width: 134px;
    margin: 0 16px;
}
.combo select {
    padding-left: 20px;
}
.pick-type {
    width: 131px;
}
.lbl-notes {
    margin: 0 17px 0 27px;
}
.combo-notes {
    width: 114px;
}
.keysnap {
    display: flex;
    align-items: center;
    gap: 12px;
    margin-left: 38px;
}
.keysnap input {
    appearance: none;
    width: 28px;
    height: 28px;
    border-radius: 7px;
    background: #fff;
    border: 1px solid #c9cccc;
}
.lbl-color {
    margin: 0 16px 0 40px;
}
.pick-color {
    width: 184px;
}
.pick-track {
    width: 196px;
    margin: 0 10px 0 auto;
}
.pick-channel {
    width: 196px;
}
```
FILE: script.js
```js
const $ = id => document.getElementById(id);
const add = (id, html) => $(id).insertAdjacentHTML("beforeend", html);
const use = name => `<svg><use href="#i-${name}"/></svg>`;

// arrange ruler, 4 bars = 473px, three beats per bar
const times = ["0:00.000", "0:07.200", "0:14.400", "0:21.600", "0:28.800", "0:36.000"];
for (let i = 0; i < 68; i++) {
    const x = Math.round(i * 472.8 / 12);
    const type = i % 12 === 0 ? "major" : i % 3 === 0 ? "bar" : "";
    add("ruler", `<i class="ruler-tick ${type}" style="left:${x}px"></i>`);
    if (i % 12 === 0) {
        add("ruler", `<div class="ruler-label" style="left:${x + 8}px">${i / 3 + 1}.1<small>${times[i / 12]}</small></div>`);
    }
}

// track panel
const row = (n, cls = "") => `<div class="tcp-row ${cls}"><span>${n}</span><i></i>${cls === "tcp-last" ? "" : use("folder")}</div>`;
const folder = '<div class="tcp-folder"><i class="ring"></i></div>';
add("tcp", row("", "tcp-first") + row(5) + row(6, "selected") + row(7) + folder + row(8) + row(9) + folder + row(10) + row("", "tcp-last"));

// arrange lanes: [class, height, mini note thickness, note rows]
const lanes = [
    ["lane-marker", 46], ["", 143],
    ["lane-item", 124, 6, [79, 48, 37, 31, 73]], ["", 155],
    ["lane-teal", 36], ["", 154],
    ["lane-item", 124, 4, [78, 58, 50, 46, 74]], ["", 14],
    ["lane-teal", 40, 2, [21, 12, 12, 8, 21], "#47957c"], ["", 20],
    ["lane-item", 124, 2, [75, 65, 61, 59, 73]], ["", 50]
];
const mini = [[0, 34, 0], [30, 15, 1], [40, 21, 2], [60, 98, 3], [98, 24, 4], [128, 28, 4], [158, 25, 0], [188, 34, 0], [218, 20, 1], [246, 8, 1]];
lanes.forEach(([cls, h, t, ys, color]) => {
    const notes = ys ? mini.map(([x, w, k]) => `<rect x="${x}" y="${ys[k]}" width="${w}" height="${t}" fill="${color || "#1e1e1e"}"/>`).join("") : "";
    add("lanes", `<div class="lane ${cls}" style="height:${h}px">${notes && `<svg>${notes}</svg>`}</div>`);
});
for (let i = 0; i < 7; i++) {
    add("lanes", `<i class="lane-line ${i % 3 === 0 ? "bar" : ""}" style="left:${3000 + Math.round(i * 39.4)}px"></i>`);
}

// mixer strips
const stripNames = { 1: "cymbal", 2: "cymbal", 6: "dulcy", 7: "harp", 17: "frenchie", 18: "frenchie" };
const tri = '<svg viewBox="0 0 32 32" width="32" height="32"><circle cx="16" cy="16" r="16" fill="#8a9193"/><path d="M8 11h16l-8 12z" fill="#e6e6e6"/></svg>';
const fader = low => `<div class="fader ${low ? "low" : ""}"><svg viewBox="0 0 44 256" width="44" height="256">
    <path d="M19 0h6v250h-6z" fill="#000"/>
    <g class="cap"><path d="M2 32c0-12 40-12 40 0v66c0 12-40 12-40 0z" fill="#111"/>
    <path d="M4 32c2-10 34-10 36 0v6H4z" fill="#dcdcdc"/><path d="M4 39h36v24H4z" fill="#4b4f4e"/><path d="M4 66h36v10H4z" fill="#8a8a8a"/><path d="M4 76h36v15H4z" fill="#e2e2e2"/><path d="M4 92h36v4c-2 10-34 10-36 0z" fill="#9a9a9a"/></g></svg></div>`;
const stripBody = n => `<div class="strip-in">
        <button class="pill pill-wide"><span>MIDI (not conn</span>${tri}</button>
        <button class="pill pill-in">in ${tri}</button>
        <button class="infx">IN<br>FX</button>
        <svg class="pan" viewBox="0 0 40 42" width="40" height="42"><circle cx="20" cy="22" r="19" fill="#555"/><circle cx="20" cy="20" r="18" fill="#c9cdcd" stroke="#2c2c2c" stroke-width="2"/>${n === 17 ? '<path d="M9 15q3-6 9-7" fill="none" stroke="#222" stroke-width="2"/><circle cx="9" cy="15" r="3"/>' : '<path d="M22 8q5 0 7 3" fill="none" stroke="#222" stroke-width="2"/><circle cx="29" cy="12" r="3"/>'}</svg>
    </div>
    <div class="strip-main">
        <span class="strip-inf">-inf</span>${fader(n === 18)}
        <div class="sbtns">
            <button class="sbtn sbtn-m">M</button><button class="sbtn sbtn-s">S</button><button class="sbtn sbtn-route" aria-label="Route"></button>
            <button class="sbtn sbtn-fx">FX</button>
            <button class="sbtn sbtn-pow" aria-label="FX bypass"><svg viewBox="0 0 20 20" width="20" height="20"><path d="M6 5a7 7 0 1 0 8 0M10 1v9" fill="none" stroke="#2c4a41" stroke-width="2"/></svg></button>
            <button class="sbtn sbtn-env" aria-label="Envelopes"><svg viewBox="0 0 36 36" width="36" height="36"><path d="M9 24l10-12 9 10" fill="none" stroke="#333" stroke-width="2"/><circle cx="9" cy="24" r="4" fill="#333"/><circle cx="19" cy="13" r="4" fill="#333"/><circle cx="28" cy="22" r="4" fill="#333"/></svg></button>
        </div>
        <svg class="strip-bottom speaker" viewBox="0 0 20 28" width="20" height="28"><path d="M2 9h6l9-9v28l-9-9H2z" fill="#7a7f80"/></svg>
        <svg class="strip-bottom" viewBox="0 0 40 40" width="40" height="40"><use href="#i-rec"/></svg>
        <svg class="strip-bottom phase" viewBox="0 -4 30 48" width="30" height="48"><circle cx="15" cy="10" r="14" fill="#858a8b"/><circle cx="15" cy="10" r="6" fill="none" stroke="#333" stroke-width="2"/><path d="M8 18L22 2" stroke="#333" stroke-width="2"/></svg>
        <span class="strip-name">${stripNames[n]}</span>
    </div>`;
for (let n = 1; n <= 18; n++) {
    const body = n > 16 ? stripBody(n) : `<div class="strip-in"></div><div class="strip-main"><span class="strip-name">${stripNames[n] || ""}</span></div>`;
    add("strips", `<div class="strip ${n === 6 ? "selected" : ""}">${body}<div class="strip-num">${n}</div></div>`);
}

// piano keyboard, top key is E5
let octave = 5;
let y = 0;
const whites = "EDCBAGF";
while (y < 1160) {
    for (const k of whites) {
        if (k === "B") octave--;
        const short = "EDC".includes(k);
        add("keyboard", `<div class="key ${short ? "short" : ""} ${k === "C" && octave === 3 ? "down" : ""}">${k === "C" ? "C" + octave : ""}</div>`);
    }
    for (const r of [1, 3, 6, 8, 10]) {
        add("keyboard", `<i class="key-black" style="top:${y + r * 24 - 3}px"></i>`);
    }
    y += 288;
}

// piano roll bars and beats
const barW = 158.55;
for (let b = 0; b < 14; b++) {
    const x = Math.round(b * barW);
    add("rollRuler", `<div class="roll-bar" style="left:${x}px">${b + 1}</div>`);
    const x3 = Math.round((b + 2 / 3) * barW);
    add("rollRuler", `<div class="roll-beat" style="left:${x3 - 30}px">${b + 1}.3</div>`);
    for (let t = 0; t < 3; t++) {
        const xt = Math.round((b + t / 3) * barW);
        const shaded = xt < 107 || xt > 1902 ? "shaded" : "";
        add("rollGrid", `<i class="vline ${t ? "" : "bar"} ${shaded}" style="left:${xt}px"></i>`);
        add("ccLane", `<i class="vline ${t ? "" : "bar"}" style="left:${xt}px"></i>`);
    }
}

// notes: name, start, length, colour
const rows = { D4: 14, C4: 16, B3: 17, A3: 19, G3: 21, F3: 23, E3: 24, D3: 26 };
const notes = [
    ["F3", 132, 29, "yellow"], ["F3", 170, 33, "gold"], ["F3", 212, 30, "lime"], ["E3", 250, 40, "orange"],
    ["A3", 290, 58, "gold"], ["F3", 342, 29, "orange"], ["F3", 384, 30, "orange"], ["E3", 422, 44, "yellow"],
    ["A3", 462, 18, "green"], ["B3", 477, 26, "orange"], ["C4", 502, 130, "yellow"], ["F3", 554, 30, "green"],
    ["F3", 594, 38, "gold"], ["E3", 634, 32, "lime"], ["E3", 674, 42, "orange"], ["A3", 714, 54, "orange"],
    ["E3", 764, 51, "orange"], ["F3", 806, 38, "yellow"], ["E3", 846, 38, "yellow"], ["D3", 884, 42, "lime"],
    ["E3", 922, 46, "gold"], ["F3", 978, 29, "yellow"], ["F3", 1018, 31, "yellow"], ["F3", 1058, 32, "green"],
    ["E3", 1094, 42, "orange"], ["A3", 1136, 58, "gold"], ["F3", 1188, 30, "orange"], ["F3", 1228, 33, "orange"],
    ["E3", 1268, 42, "lime"], ["A3", 1308, 18, "green"], ["B3", 1322, 26, "orange"], ["C4", 1348, 130, "yellow"],
    ["F3", 1400, 31, "green"], ["F3", 1438, 38, "gold"], ["E3", 1480, 32, "lime"], ["E3", 1520, 42, "orange"],
    ["A3", 1558, 29, "orange"], ["A3", 1598, 28, "orange"], ["C4", 1638, 14, "orange"], ["G3", 1652, 38, "yellow"],
    ["D4", 1692, 38, "yellow"], ["G3", 1732, 40, "lime"], ["A3", 1770, 44, "gold"], ["E3", 1824, 12, "gold", true],
    ["F3", 1836, 15, "yellow"], ["E3", 1850, 12, "green"], ["D3", 1862, 30, "sel"]
];
notes.forEach(([name, x, w, color, bare]) => {
    add("rollGrid", `<div class="note note-${color}" style="left:${x}px;top:${rows[name] * 24}px;width:${w}px;--w:${w}px">${bare ? "" : `<span>${name}</span>`}</div>`);
});

// track list
const tracks = ["cymbal", "cymbal", "china drum 2", "china drum", "dulcy", "harp", "dulcy", "bass", "bassoon", "hazardous", "horno", "bari sax", "flutes", "trombo", "16", "frenchie", "frenchie", "clarinet", "chellas", "chellas", "weird violin", "trumpet", "harp", "glock", "pioccolo"];
tracks.forEach((name, i) => {
    const a = i === 4 ? "active" : "";
    add("tracks", `<tr>
        <td class="c-play">${use("play")}</td>
        <td><label class="name-cell ${name === "16" ? "num" : ""}"><span>${name}</span><input type="checkbox"></label></td>
        <td class="c-ico ${a}">${use("insert")}</td>
        <td class="c-ico ${a} lit">${use(a ? "unlock" : "lock")}</td>
        <td class="c-ico ${a} lit eye">${use("eye")}</td>
        <td class="c-rec">${use("rec")}</td>
        <td><button class="ms ${i === 22 ? "ms-on" : ""}">M</button></td>
        <td><button class="ms ms-s">S</button></td>
    </tr>`);
});
```
